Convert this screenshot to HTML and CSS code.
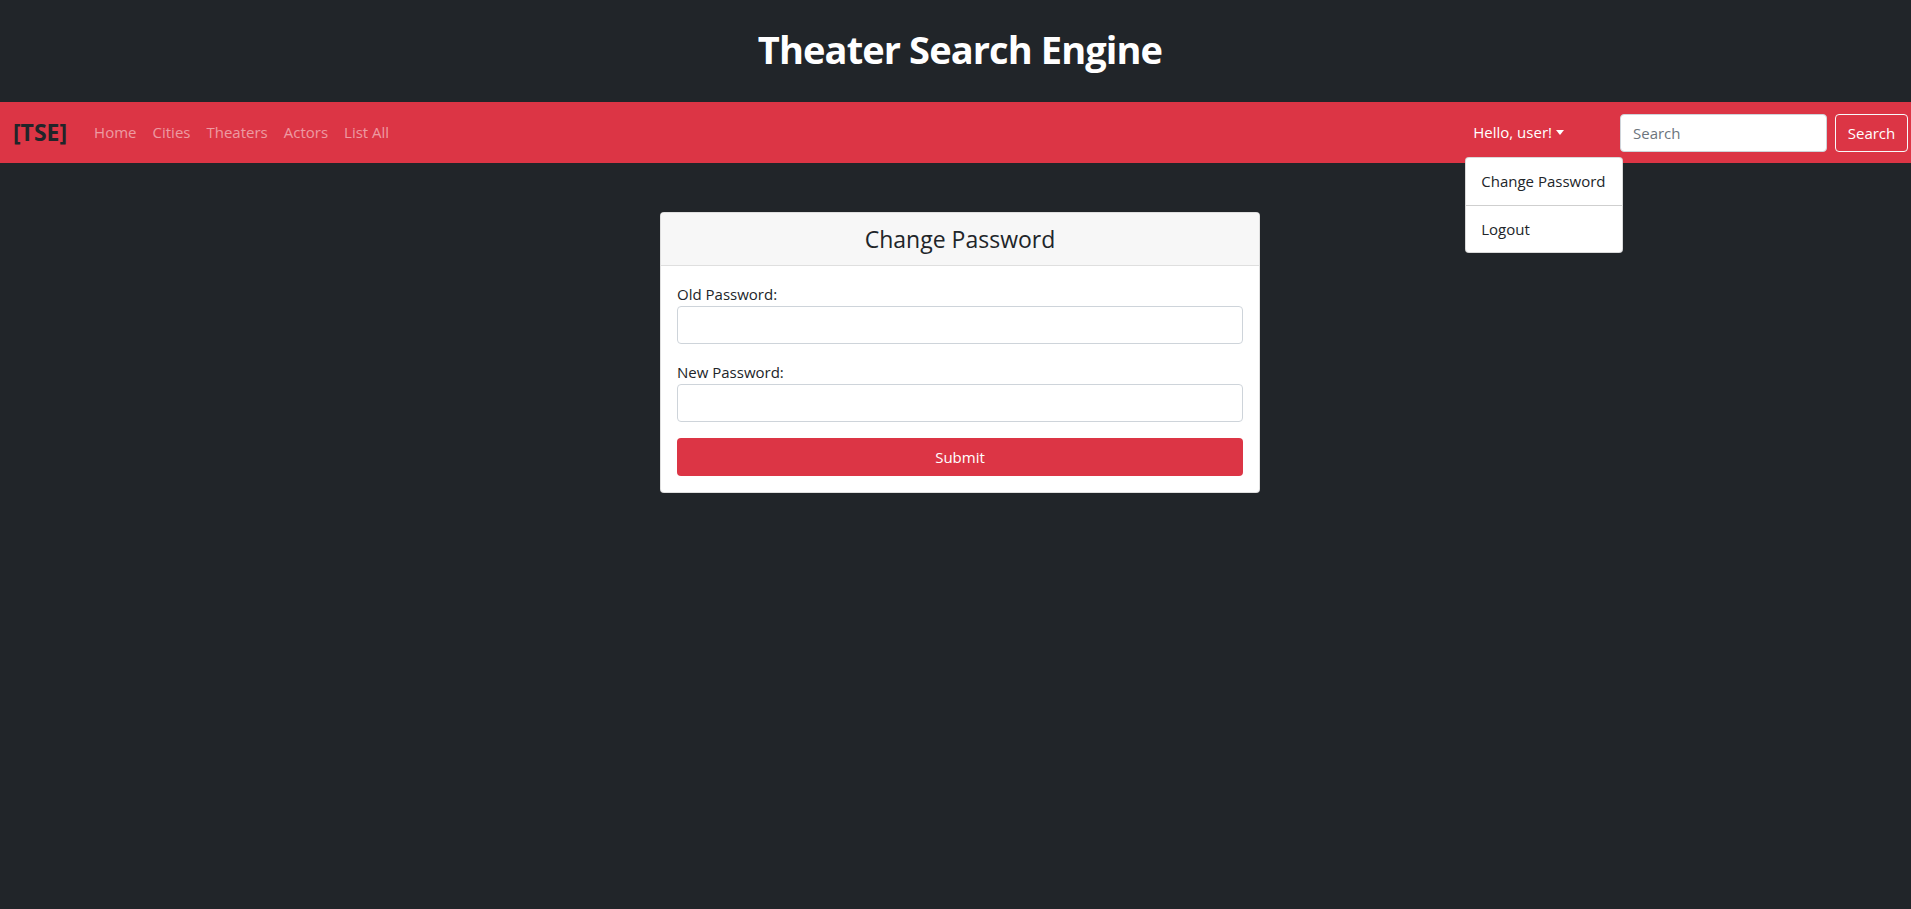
FILE: index.html
```html
<!DOCTYPE html>
<html lang="en">
<head>
<meta charset="utf-8">
<title>Theater Search Engine</title>
<link rel="stylesheet" href="styles.css">
</head>
<body>
<header class="site-header">
  <h1 class="site-title">Theater Search Engine</h1>
</header>
<nav class="navbar">
  <a class="brand" href="#">[TSE]</a>
  <ul class="nav-links">
    <li><a class="nav-link" href="#">Home</a></li>
    <li><a class="nav-link" href="#">Cities</a></li>
    <li><a class="nav-link" href="#">Theaters</a></li>
    <li><a class="nav-link" href="#">Actors</a></li>
    <li><a class="nav-link" href="#">List All</a></li>
  </ul>
  <div class="user-menu">
    <a class="nav-link user-toggle" href="#">Hello, user!<span class="caret"></span></a>
    <div class="dropdown">
      <a class="dropdown-item" href="#">Change Password</a>
      <div class="dropdown-divider"></div>
      <a class="dropdown-item" href="#">Logout</a>
    </div>
  </div>
  <form class="search-form">
    <input class="search-input" type="search" placeholder="Search">
    <button class="search-btn" type="button">Search</button>
  </form>
</nav>
<main class="main">
  <section class="card">
    <div class="card-header">
      <h4 class="card-title">Change Password</h4>
    </div>
    <form class="card-body">
      <label class="field-label" for="old">Old Password:</label>
      <input class="field-input" id="old" type="password">
      <label class="field-label" for="new">New Password:</label>
      <input class="field-input" id="new" type="password">
      <button class="submit-btn" type="button">Submit</button>
    </form>
  </section>
</main>
</body>
</html>
```
FILE: styles.css
```css
* { box-sizing: border-box; }
html, body {
  margin: 0;
  padding: 0;
  background: #212529;
  font-family: "Open Sans", "Noto Sans", sans-serif;
  font-size: 16px;
  line-height: 1.5;
  color: #212529;
}
a { text-decoration: none; }

.site-header {
  height: 102px;
  display: flex;
  align-items: center;
  justify-content: center;
  padding: 0 0 2px 9px;
}
.site-title {
  margin: 0;
  color: #fff;
  font-size: 38px;
  font-weight: 700;
  line-height: 1.2;
  letter-spacing: -0.9px;
}

.navbar {
  height: 61px;
  background: #dc3545;
  display: flex;
  align-items: center;
  padding: 0 3px 0 13px;
}
.brand {
  color: #212529;
  font-size: 23px;
  font-weight: 700;
  margin-right: 19px;
  line-height: 1.5;
}
.nav-links {
  list-style: none;
  margin: 0;
  padding: 0;
  display: flex;
}
.nav-link {
  display: block;
  padding: 8px;
  color: rgba(255, 255, 255, 0.5);
  font-size: 15px;
}
.user-menu {
  margin-left: auto;
  position: relative;
}
.user-toggle { color: #fff; }
.caret {
  display: inline-block;
  margin-left: 4px;
  vertical-align: 3px;
  border-top: 5px solid #fff;
  border-left: 4px solid transparent;
  border-right: 4px solid transparent;
}
.dropdown {
  position: absolute;
  top: 44px;
  left: 0;
  width: 158px;
  background: #fff;
  border: 1px solid rgba(0, 0, 0, 0.15);
  border-radius: 4px;
  z-index: 10;
}
.dropdown-item {
  display: block;
  padding: 12px 15px;
  color: #212529;
  font-size: 15px;
  white-space: nowrap;
}
.dropdown-divider {
  height: 1px;
  background: #cfcfcf;
}

.search-form {
  display: flex;
  gap: 8px;
  margin-left: 48px;
}
.search-input {
  width: 207px;
  height: 38px;
  padding: 6px 12px;
  border: 1px solid #ced4da;
  border-radius: 4px;
  font-family: inherit;
  font-size: 15px;
  color: #495057;
  background: #fff;
}
.search-input::placeholder { color: #6c757d; }
.search-btn {
  width: 73px;
  height: 38px;
  border: 1px solid #f8f9fa;
  border-radius: 4px;
  background: transparent;
  color: #fff;
  font-family: inherit;
  font-size: 15px;
  padding: 0;
}

.main {
  display: flex;
  justify-content: center;
  padding: 49px 0 0 9px;
}
.card {
  width: 600px;
  background: #fff;
  border: 1px solid rgba(0, 0, 0, 0.125);
  border-radius: 4px;
  overflow: hidden;
}
.card-header {
  background: #f7f7f7;
  border-bottom: 1px solid #dfdfdf;
  padding: 12px 16px;
  text-align: center;
}
.card-title {
  margin: 0;
  font-size: 23px;
  font-weight: 400;
  line-height: 28px;
  color: #212529;
}
.card-body {
  display: flex;
  flex-direction: column;
  padding: 16px;
}
.field-label {
  display: block;
  font-size: 15px;
  line-height: 24px;
  color: #212529;
}
.field-input {
  height: 38px;
  margin-bottom: 16px;
  border: 1px solid #ced4da;
  border-radius: 4px;
  padding: 6px 12px;
}
.submit-btn {
  height: 38px;
  border: none;
  border-radius: 4px;
  background: #dc3545;
  color: #fff;
  font-family: inherit;
  font-size: 15px;
}
```
